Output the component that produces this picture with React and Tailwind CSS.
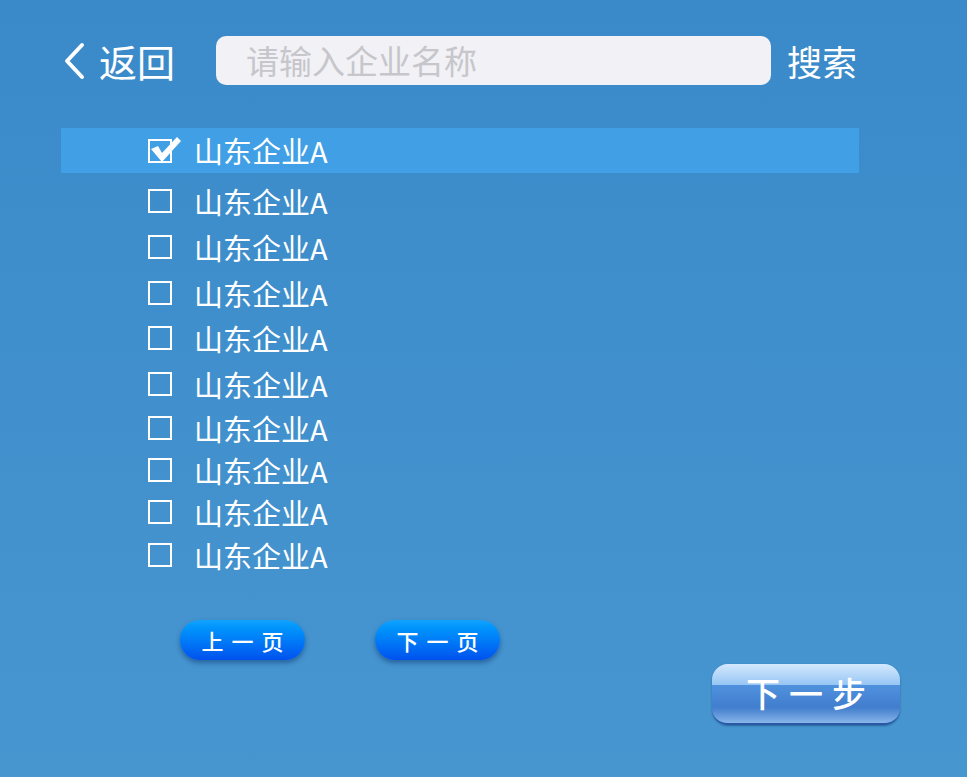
import React, { useState } from 'react';

const ROW_GAPS = ['mt-0', 'mt-[7px]', 'mt-1', 'mt-1', 'mt-[3px]', 'mt-1', 'mt-0.5', 'mt-0', 'mt-0', 'mt-px'];

const CJK = { fontFamily: '"Noto Sans CJK SC", "Noto Sans", sans-serif' };

function CheckBox({ checked }) {
  return (
    <div className="relative w-[24px] h-[24px] border-2 border-white shrink-0">
      {checked && (
        <svg className="absolute -left-[1px] -top-[6px]" width="34" height="30" viewBox="0 0 34 30">
          <path d="M2 14 L9 11 L13 18 L28 2 L32 6 L13 27 Z" fill="white" />
        </svg>
      )}
    </div>
  );
}

export default function App() {
  const [selected, setSelected] = useState(0);
  const companies = Array.from({ length: 10 }, () => '山东企业A');

  return (
    <div
      className="w-[967px] h-[777px] overflow-hidden bg-gradient-to-b from-[#3a8aca] to-[#4796d0] text-white"
      style={CJK}
    >
      {/* header */}
      <div className="flex items-center pt-[36px] pl-[63px]">
        <svg width="22" height="38" viewBox="0 0 22 38" className="shrink-0">
          <polyline points="19,3 4,19 19,35" fill="none" stroke="white" strokeWidth="4" strokeLinecap="round" strokeLinejoin="round" />
        </svg>
        <span className="ml-[14px] text-[38px] leading-none">返回</span>
        <div className="ml-[41px] w-[555px] h-[49px] rounded-[10px] bg-[#f2f1f6] flex items-center pl-[30px]">
          <span className="text-[33px] leading-none text-[#c6c6cb]">请输入企业名称</span>
        </div>
        <span className="ml-[16px] text-[35px] leading-none">搜索</span>
      </div>

      {/* list */}
      <div className="mt-[43px] w-[798px] ml-[61px]">
        {companies.map((name, i) => (
          <div
            key={i}
            onClick={() => setSelected(i)}
            className={`${ROW_GAPS[i]} flex items-center pl-[87px] cursor-pointer ${
              i === selected ? 'h-[45px] bg-[#41a0e5]' : 'h-[42px]'
            }`}
          >
            <CheckBox checked={i === selected} />
            <span className="ml-[22px] text-[29px] leading-none">{name}</span>
          </div>
        ))}
      </div>

      {/* pagination */}
      <div className="flex mt-[44px] pl-[180px] gap-[70px]">
        <button className="w-[125px] h-[40px] rounded-full bg-gradient-to-b from-[#12a3ff] to-[#0050ee] shadow-[0_3px_5px_rgba(0,40,100,0.45)] text-[22px] font-medium tracking-[8px] pl-[8px] leading-none flex items-center justify-center">
          上一页
        </button>
        <button className="w-[125px] h-[40px] rounded-full bg-gradient-to-b from-[#12a3ff] to-[#0050ee] shadow-[0_3px_5px_rgba(0,40,100,0.45)] text-[22px] font-medium tracking-[8px] pl-[8px] leading-none flex items-center justify-center">
          下一页
        </button>
      </div>

      {/* next step */}
      <div className="flex justify-end pr-[67px] mt-[4px]">
        <button className="relative w-[188px] h-[61px] rounded-[16px] overflow-hidden border-b-2 border-[#2858a6] shadow-[0_1px_2px_rgba(0,30,80,0.4)] bg-gradient-to-b from-[#5fa4ec] via-[#4a8ad8] to-[#3670c2]">
          <div className="absolute inset-x-0 top-0 h-[21px] bg-gradient-to-b from-[#d4e9fd] to-[#96c5f4]" />
          <div className="absolute inset-x-0 bottom-0 h-[16px] bg-gradient-to-b from-[#3a74c4]/0 to-[#8ab8ec]" />
          <span className="relative text-[34px] font-medium tracking-[9px] pl-[9px] leading-none">下一步</span>
        </button>
      </div>
    </div>
  );
}
